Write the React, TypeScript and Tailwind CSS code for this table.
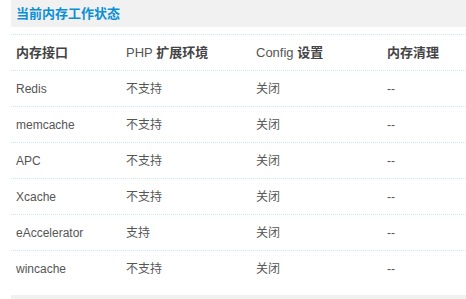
import React from "react";

const rows = [
  ["Redis", "不支持", "关闭", "--"],
  ["memcache", "不支持", "关闭", "--"],
  ["APC", "不支持", "关闭", "--"],
  ["Xcache", "不支持", "关闭", "--"],
  ["eAccelerator", "支持", "关闭", "--"],
  ["wincache", "不支持", "关闭", "--"],
];

const cols = "grid grid-cols-[110px_130px_131px_1fr]";

export default function App() {
  return (
    <div
      className="w-[466px] h-[299px] bg-white pl-[11px] overflow-hidden"
      style={{ fontFamily: '"Liberation Sans", Arial, "Noto Sans CJK SC", sans-serif' }}
    >
      <div className="h-[27px] bg-[#f1f1f1] flex items-center pl-[5px] pt-[1px]">
        <span className="text-[13px] font-bold text-[#0a8fd6]">当前内存工作状态</span>
      </div>
      <div className="mt-[7px] border-t border-dotted border-[#c9e6f6]">
        <div className={`${cols} h-[36px] items-center border-b border-dotted border-[#c9e6f6] text-[13px] font-bold text-[#444]`}>
          <div className="pl-[5px]">内存接口</div>
          <div className="pl-[5px]">
            <span className="font-normal text-[#555]">PHP</span> 扩展环境
          </div>
          <div className="pl-[5px]">
            <span className="font-normal text-[#555]">Config</span> 设置
          </div>
          <div className="pl-[5px]">内存清理</div>
        </div>
        {rows.map((r, i) => (
          <div
            key={i}
            className={`${cols} h-[36px] items-center text-[12px] text-[#555] ${
              i < rows.length - 1 ? "border-b border-dotted border-[#c9e6f6]" : ""
            }`}
          >
            <div className="pl-[5px]">{r[0]}</div>
            <div className="pl-[5px]">{r[1]}</div>
            <div className="pl-[5px]">{r[2]}</div>
            <div className="pl-[5px]">{r[3]}</div>
          </div>
        ))}
      </div>
      <div className="mt-[8px] h-[10px] bg-[#f1f1f1]" />
    </div>
  );
}
